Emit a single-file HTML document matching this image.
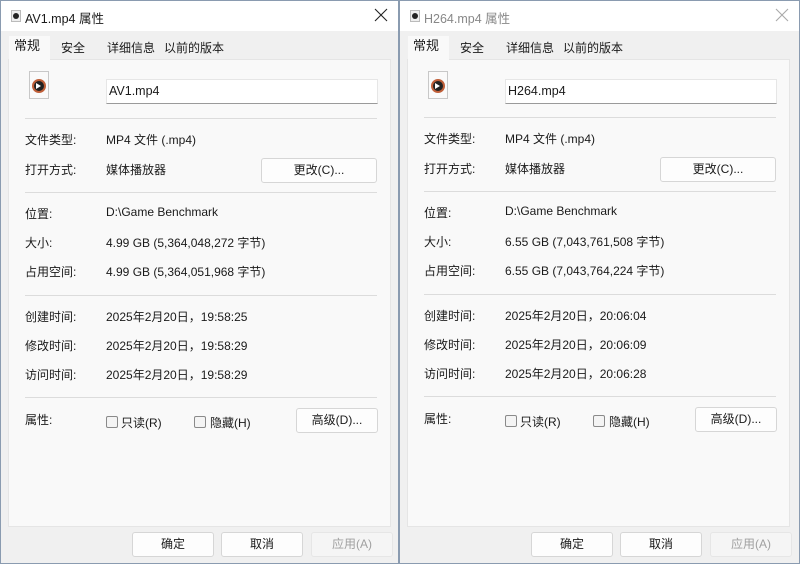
<!DOCTYPE html>
<html><head><meta charset="utf-8"><style>
*{margin:0;padding:0;box-sizing:border-box}
body{width:800px;height:564px;overflow:hidden;background:#3a6a9a;font-family:"Liberation Sans","Noto Sans CJK SC",sans-serif;font-size:12px;color:#1a1a1a;position:relative}
.dlg{position:absolute;top:0;width:399px;height:564px;background:#f0f0f0;border:1px solid #8a9bb0}
.dlg *{position:absolute}
.title{left:0;top:0;width:100%;height:30px;background:#fff}
.ttext{left:24px;top:7px;font-size:12.5px}
.x{right:10px;top:7px;width:14px;height:14px}
.tab{top:38px;height:20px;font-size:12px;padding:0 5px;line-height:18px;background:#f0f0f0}
.tab.act{top:35px;height:24px;background:#f9f9f9;font-size:13px;line-height:20px}
.panel{left:7px;top:58px;width:383px;height:468px;background:#f9f9f9;border:1px solid #e5e5e5}
.sep{left:24px;width:352px;height:1px;background:#dcdcdc}
.lb{left:24px;margin-top:-2px}
.val{left:105px;margin-top:-2px}
.btn{background:#fdfdfd;border:1px solid #d6d6d6;border-radius:3px;text-align:center;line-height:23px;height:25px}
.cb{width:12px;height:12px;border:1px solid #8a8a8a;border-radius:2px;background:#f4f4f4}
.name{left:105px;top:78px;width:272px;height:25px;background:#fff;border:1px solid #e6e6e6;border-bottom:1px solid #9a9a9a;padding:4px 2px;font-size:12.5px}
.fi{left:28px;top:70px;width:20px;height:28px;background:#fafafa;border:1px solid #c8c8c8}
.fi i{left:2px;top:7px;width:14px;height:14px;border-radius:50%;background:#222;border:2px solid #c0603a}
.fi b{left:6px;top:11px;width:0;height:0;border-left:5px solid #fff;border-top:3px solid transparent;border-bottom:3px solid transparent}
.si{left:10px;top:9px;width:10px;height:12px;background:#eee;border:1px solid #bbb}
.si i{left:1px;top:2px;width:6px;height:6px;border-radius:50%;background:#222}
</style></head><body>

<div class="dlg" style="left:0">
<div class="title"><div class="si"><i></i></div><div class="ttext">AV1.mp4 属性</div><svg class="x" viewBox="0 0 14 14"><path d="M1 1L13 13M13 1L1 13" stroke="#222" stroke-width="1.1"/></svg></div>
<div class="panel"></div>
<div class="tab act" style="left:8px;width:41px">常规</div>
<div class="tab" style="left:55px">安全</div>
<div class="tab" style="left:101px">详细信息</div>
<div class="tab" style="left:158px">以前的版本</div>
<div class="fi"><i></i><b></b></div>
<div class="name">AV1.mp4</div>
<div class="sep" style="top:117px"></div>
<div class="lb" style="top:132px">文件类型:</div><div class="val" style="top:132px">MP4 文件 (.mp4)</div>
<div class="lb" style="top:162px">打开方式:</div><div class="val" style="top:162px">媒体播放器</div>
<div class="btn" style="left:260px;top:157px;width:116px">更改(C)...</div>
<div class="sep" style="top:191px"></div>
<div class="lb" style="top:206px">位置:</div><div class="val" style="top:206px">D:\Game Benchmark</div>
<div class="lb" style="top:235px">大小:</div><div class="val" style="top:235px">4.99 GB (5,364,048,272 字节)</div>
<div class="lb" style="top:264px">占用空间:</div><div class="val" style="top:264px">4.99 GB (5,364,051,968 字节)</div>
<div class="sep" style="top:294px"></div>
<div class="lb" style="top:309px">创建时间:</div><div class="val" style="top:309px">2025年2月20日，19:58:25</div>
<div class="lb" style="top:338px">修改时间:</div><div class="val" style="top:338px">2025年2月20日，19:58:29</div>
<div class="lb" style="top:367px">访问时间:</div><div class="val" style="top:367px">2025年2月20日，19:58:29</div>
<div class="sep" style="top:396px"></div>
<div class="lb" style="top:412px">属性:</div>
<div class="cb" style="left:105px;top:415px"></div><div style="left:120px;top:413px">只读(R)</div>
<div class="cb" style="left:193px;top:415px"></div><div style="left:209px;top:413px">隐藏(H)</div>
<div class="btn" style="left:295px;top:407px;width:82px">高级(D)...</div>
<div class="btn" style="left:131px;top:531px;width:82px">确定</div>
<div class="btn" style="left:220px;top:531px;width:82px">取消</div>
<div class="btn" style="left:310px;top:531px;width:82px;color:#a0a0a0;background:#f5f5f5;border-color:#e6e6e6">应用(A)</div>
</div>

<div class="dlg" style="left:399px;width:401px">
<div class="title"><div class="si"><i></i></div><div class="ttext" style="color:#888">H264.mp4 属性</div><svg class="x" viewBox="0 0 14 14"><path d="M1 1L13 13M13 1L1 13" stroke="#aaa" stroke-width="1.1"/></svg></div>
<div class="panel"></div>
<div class="tab act" style="left:8px;width:41px">常规</div>
<div class="tab" style="left:55px">安全</div>
<div class="tab" style="left:101px">详细信息</div>
<div class="tab" style="left:158px">以前的版本</div>
<div class="fi"><i></i><b></b></div>
<div class="name">H264.mp4</div>
<div class="sep" style="top:116px"></div>
<div class="lb" style="top:131px">文件类型:</div><div class="val" style="top:131px">MP4 文件 (.mp4)</div>
<div class="lb" style="top:161px">打开方式:</div><div class="val" style="top:161px">媒体播放器</div>
<div class="btn" style="left:260px;top:156px;width:116px">更改(C)...</div>
<div class="sep" style="top:190px"></div>
<div class="lb" style="top:205px">位置:</div><div class="val" style="top:205px">D:\Game Benchmark</div>
<div class="lb" style="top:234px">大小:</div><div class="val" style="top:234px">6.55 GB (7,043,761,508 字节)</div>
<div class="lb" style="top:263px">占用空间:</div><div class="val" style="top:263px">6.55 GB (7,043,764,224 字节)</div>
<div class="sep" style="top:293px"></div>
<div class="lb" style="top:308px">创建时间:</div><div class="val" style="top:308px">2025年2月20日，20:06:04</div>
<div class="lb" style="top:337px">修改时间:</div><div class="val" style="top:337px">2025年2月20日，20:06:09</div>
<div class="lb" style="top:366px">访问时间:</div><div class="val" style="top:366px">2025年2月20日，20:06:28</div>
<div class="sep" style="top:395px"></div>
<div class="lb" style="top:411px">属性:</div>
<div class="cb" style="left:105px;top:414px"></div><div style="left:120px;top:412px">只读(R)</div>
<div class="cb" style="left:193px;top:414px"></div><div style="left:209px;top:412px">隐藏(H)</div>
<div class="btn" style="left:295px;top:406px;width:82px">高级(D)...</div>
<div class="btn" style="left:131px;top:531px;width:82px">确定</div>
<div class="btn" style="left:220px;top:531px;width:82px">取消</div>
<div class="btn" style="left:310px;top:531px;width:82px;color:#a0a0a0;background:#f5f5f5;border-color:#e6e6e6">应用(A)</div>
</div>
</body></html>
